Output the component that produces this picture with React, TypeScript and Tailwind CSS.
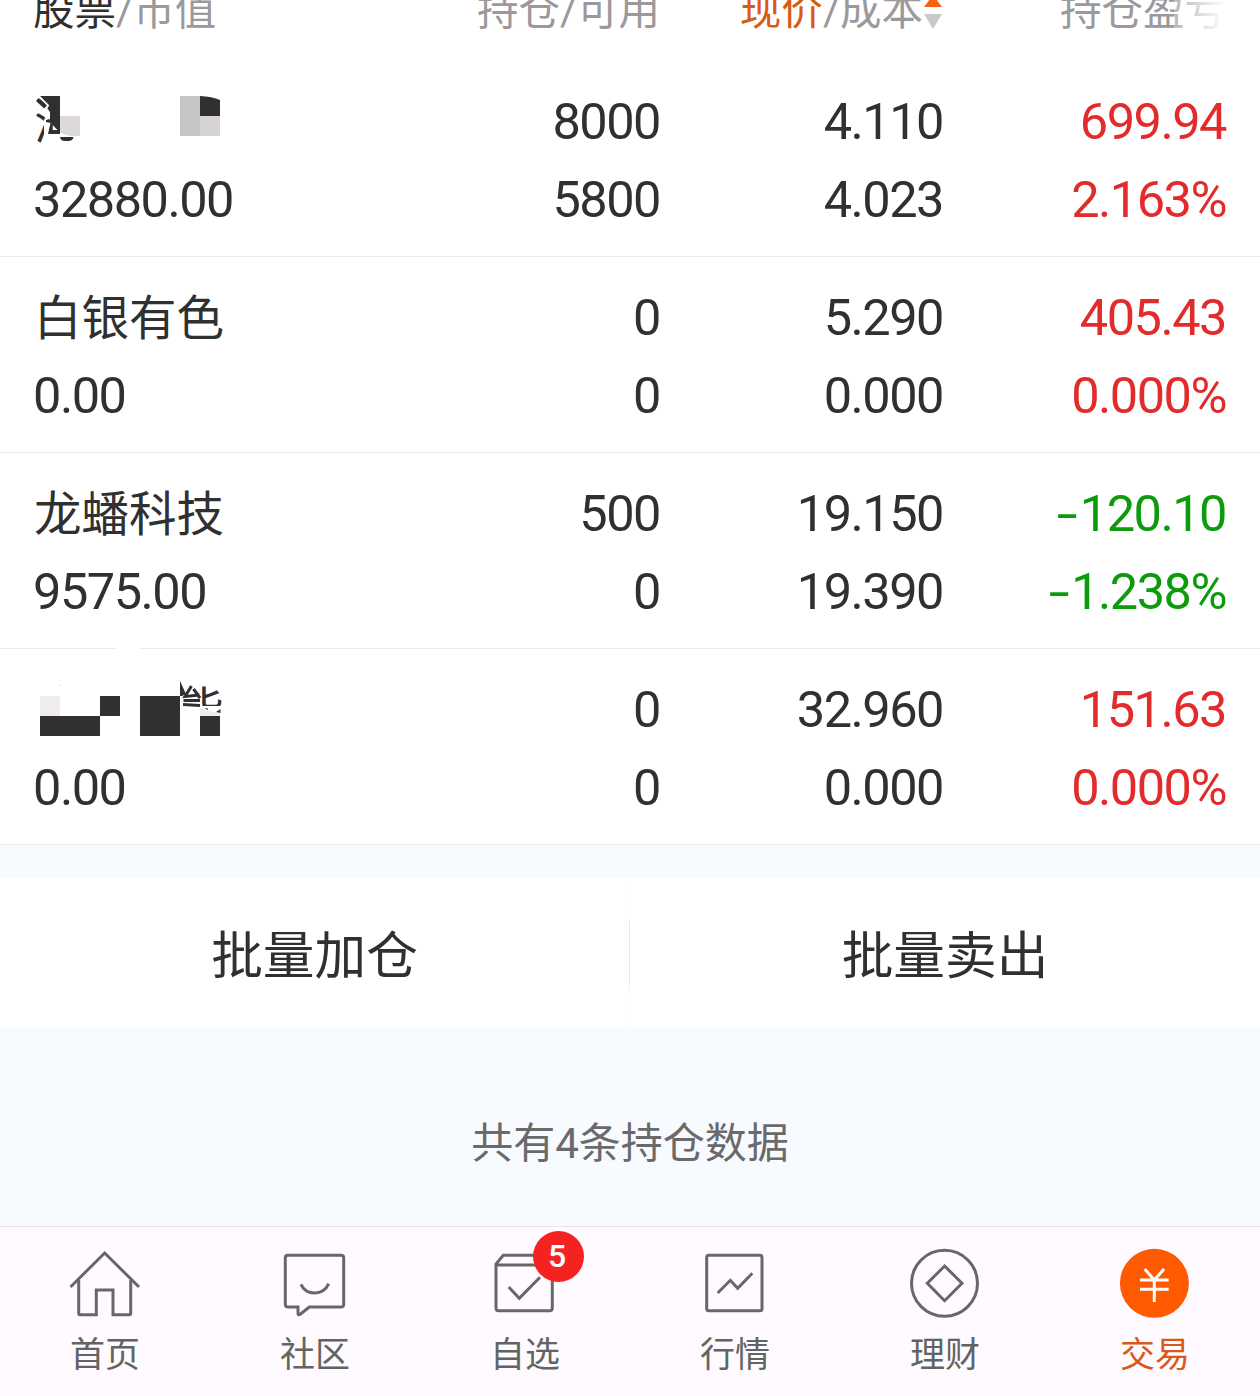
import type { ReactNode } from 'react';

type Holding = {
  name: ReactNode;
  marketValue: string;
  position: string;
  available: string;
  price: string;
  cost: string;
  profit: string;
  rate: string;
};

// Masked stock names: only fragments of the characters stay readable
function MaskedFirst() {
  return (
    <span className="relative block h-[78px]">
      海
      <svg className="absolute left-0 top-0 h-[78px] w-[200px] overflow-visible" viewBox="34 84 200 78">
        <path d="M38 92H90V148H44V121L46.500 112V104Z" fill="#fff" />
        <path d="M40 96H60V134H48L50.500 123L46 122V120L50 119V112L47 108L49 105Z" fill="#303030" />
        <path d="M52.700 125L57.500 130H52.700Z" fill="#fff" />
        <path d="M37.500 95L48 106L45 110" fill="none" stroke="#fff" strokeWidth="1.500" />
        <path d="M37.300 99.500L45.500 107" fill="none" stroke="#303030" strokeWidth="4" />
        <path d="M60 137H73.500Q73 141 68 141H65Q60.500 141 60 137Z" fill="#303030" />
        <path d="M60 116H80V136H72Q64 135 60 132Z" fill="#dcd8dc" />
        <path d="M180 96H200V136H180Z" fill="#c6c6c6" />
        <path d="M200 96Q212 96.500 220 100V116H200Z" fill="#303030" />
        <path d="M200 116H220V136H200Z" fill="#d6d2d6" />
      </svg>
    </span>
  );
}

function MaskedLast() {
  return (
    <span className="relative block h-[78px]">
      <span className="pl-[142px]">能</span>
      <svg className="absolute left-0 top-0 h-[78px] w-[200px] overflow-visible" viewBox="34 672 200 78">
        <path d="M117 646H140V651H117Z" fill="#fff" />
        <path d="M172 678H202V706H226V745H172Z" fill="#fff" />
        <path d="M191.500 686L185 696.500L199.500 695M193.500 689L200 698M183.500 700.500H200M183 704.500L200 705.500" fill="none" stroke="#303030" strokeWidth="3" />
        <path d="M40 696H60V716H40Z" fill="#efebee" />
        <path d="M200 708L220 714V716H200Z" fill="#efebee" />
        <path d="M40 716H100V736H40ZM100 696H120V716H100ZM140 696H180V736H140ZM200 716H220V736H200Z" fill="#303030" />
        <path d="M180 681L186 694L182 696H180ZM216 712L220.500 709V713ZM204 708L208 708.500V710Z" fill="#303030" />
        <path d="M59 685H61V686H59Z" fill="#e4e4e4" />
      </svg>
    </span>
  );
}

const holdings: Holding[] = [
  { name: <MaskedFirst />, marketValue: '32880.00', position: '8000', available: '5800', price: '4.110', cost: '4.023', profit: '699.94', rate: '2.163%' },
  { name: '白银有色', marketValue: '0.00', position: '0', available: '0', price: '5.290', cost: '0.000', profit: '405.43', rate: '0.000%' },
  { name: '龙蟠科技', marketValue: '9575.00', position: '500', available: '0', price: '19.150', cost: '19.390', profit: '-120.10', rate: '-1.238%' },
  { name: <MaskedLast />, marketValue: '0.00', position: '0', available: '0', price: '32.960', cost: '0.000', profit: '151.63', rate: '0.000%' },
];

function Signed({ value }: { value: string }) {
  if (!value.startsWith('-')) return <>{value}</>;
  return (
    <>
      <span className="mr-[4px] inline-block origin-right scale-x-150">-</span>
      {value.slice(1)}
    </>
  );
}

function HoldingRow({ item }: { item: Holding }) {
  const tone = item.profit.startsWith('-') ? 'text-[#0b9b0b]' : 'text-[#e22b2b]';
  return (
    <div className="grid h-[196px] grid-cols-[343px_283px_283px_283px] grid-rows-[78px_78px] border-b border-[#ececec] px-[34px] pt-[21px] text-right text-[50.5px] leading-[79px] tracking-[-1.5px] text-[#303030]">
      <div className="pt-[2px] text-left text-[47.5px] leading-[78px] tracking-normal">{item.name}</div>
      <div>{item.position}</div>
      <div>{item.price}</div>
      <div className={tone}><Signed value={item.profit} /></div>
      <div className="-ml-px text-left">{item.marketValue}</div>
      <div>{item.available}</div>
      <div>{item.cost}</div>
      <div className={tone}><Signed value={item.rate} /></div>
    </div>
  );
}

const tabs = [
  {
    label: '首页',
    icon: (
      <>
        <path d="M0.500 39L34.700 5L69 39" />
        <path d="M8.700 32V65.500Q8.700 66.700 10 66.700H26.300V42H43V66.700H59.500Q60.700 66.700 60.700 65.500V32" />
      </>
    ),
  },
  {
    label: '社区',
    icon: (
      <>
        <path d="M8 7.300H61Q63.700 7.300 63.700 10V56.300Q63.700 59 61 59H29.300L20 66.500Q18 67.500 18 65.500V59H8Q5.300 59 5.300 56.300V10Q5.300 7.300 8 7.300Z" />
        <path d="M21 36.300C26 47.500 43 48.500 48.700 35.700" />
      </>
    ),
  },
  {
    label: '自选',
    badge: 5,
    icon: (
      <>
        <path d="M62.300 17V60Q62.300 62.700 59.600 62.700H8.700Q6 62.700 6 60V16L13.300 7.300H62.300V17H6" />
        <path d="M18.700 39L29.300 50.300L50 29.300" />
      </>
    ),
  },
  {
    label: '行情',
    icon: (
      <>
        <rect x="6.700" y="7.300" width="55.300" height="55.400" rx="2" />
        <path d="M17.700 45L30.300 32.300L37.700 40.300L52.300 25.300" />
      </>
    ),
  },
  {
    label: '理财',
    icon: (
      <>
        <circle cx="34.500" cy="35.300" r="33" />
        <path d="M34.600 18L52 35.300L34.600 52.700L17.300 35.300Z" />
      </>
    ),
  },
  {
    label: '交易',
    active: true,
    icon: (
      <>
        <circle cx="34.400" cy="35.300" r="34.500" fill="#ff5a00" stroke="none" />
        <path d="M24.700 21L34.300 32L44 21M20 32H48.700M20 41.300H48.700M34.300 32V54" stroke="#fff" />
      </>
    ),
  },
];

export default function App() {
  return (
    <div className="h-[1396px] w-[1260px] overflow-hidden bg-[#f7faff] font-[Roboto,'Noto_Sans_CJK_SC',sans-serif]">
      <div className="bg-white">
        {/* Table head, partly scrolled out of view */}
        <div className="grid h-[61px] grid-cols-[343px_283px_283px_283px] whitespace-nowrap px-[34px] text-right text-[41.5px] leading-[21px] text-[#9b999b]">
          <div className="-ml-px text-left"><span className="text-[#303030]">股票</span>/市值</div>
          <div>持仓/可用</div>
          <div className="flex justify-end">
            <span><span className="text-[#d85a14]">现价</span>/成本</span>
            <svg className="h-[30px] w-[20px]" viewBox="0 0 20 30">
              <path d="M1 7L10 -5L19 7Z" fill="#fb610d" />
              <path d="M1 14H19L10 29Z" fill="#c9c9c9" />
            </svg>
          </div>
          <div className="relative">
            持仓盈亏
            <div className="absolute -top-3 right-0 h-[50px] w-[52px] bg-gradient-to-r from-white/30 to-white" />
          </div>
        </div>

        {holdings.map((item, i) => <HoldingRow key={i} item={item} />)}
      </div>

      <div className="mt-[33px] flex h-[150px] items-center bg-white text-[51.7px] text-[#303030]">
        <button className="w-[629px] pt-[7px]">批量加仓</button>
        <div className="flex h-full w-px items-center bg-[#fafafc]">
          <div className="h-[65px] w-px bg-[#e8e8e8]" />
        </div>
        <button className="w-[630px] pt-[7px]">批量卖出</button>
      </div>

      <div className="h-[198px] pt-[86px] text-center text-[42px] leading-[60px] text-[#6a6a6a]">共有4条持仓数据</div>

      <nav className="grid h-[170px] grid-cols-6 border-t border-[#e6e6e8] bg-[#fefaff]">
        {tabs.map((tab) => (
          <div key={tab.label} className="flex flex-col items-center pt-[21px]">
            <div className="relative">
              <svg className="block size-[70px] overflow-visible" viewBox="0 0 70 70" fill="none" stroke="#666866" strokeWidth="3">
                {tab.icon}
              </svg>
              {tab.badge && (
                <span className="absolute -top-[17px] left-[43px] size-[51px] rounded-full bg-[#f52222] pr-[3px] text-center text-[32px] font-medium leading-[51px] text-white">
                  {tab.badge}
                </span>
              )}
            </div>
            <span className={`mt-[12px] text-[35px] leading-[52px] ${tab.active ? 'text-[#d9591a]' : 'text-[#626462]'}`}>{tab.label}</span>
          </div>
        ))}
      </nav>
    </div>
  );
}
